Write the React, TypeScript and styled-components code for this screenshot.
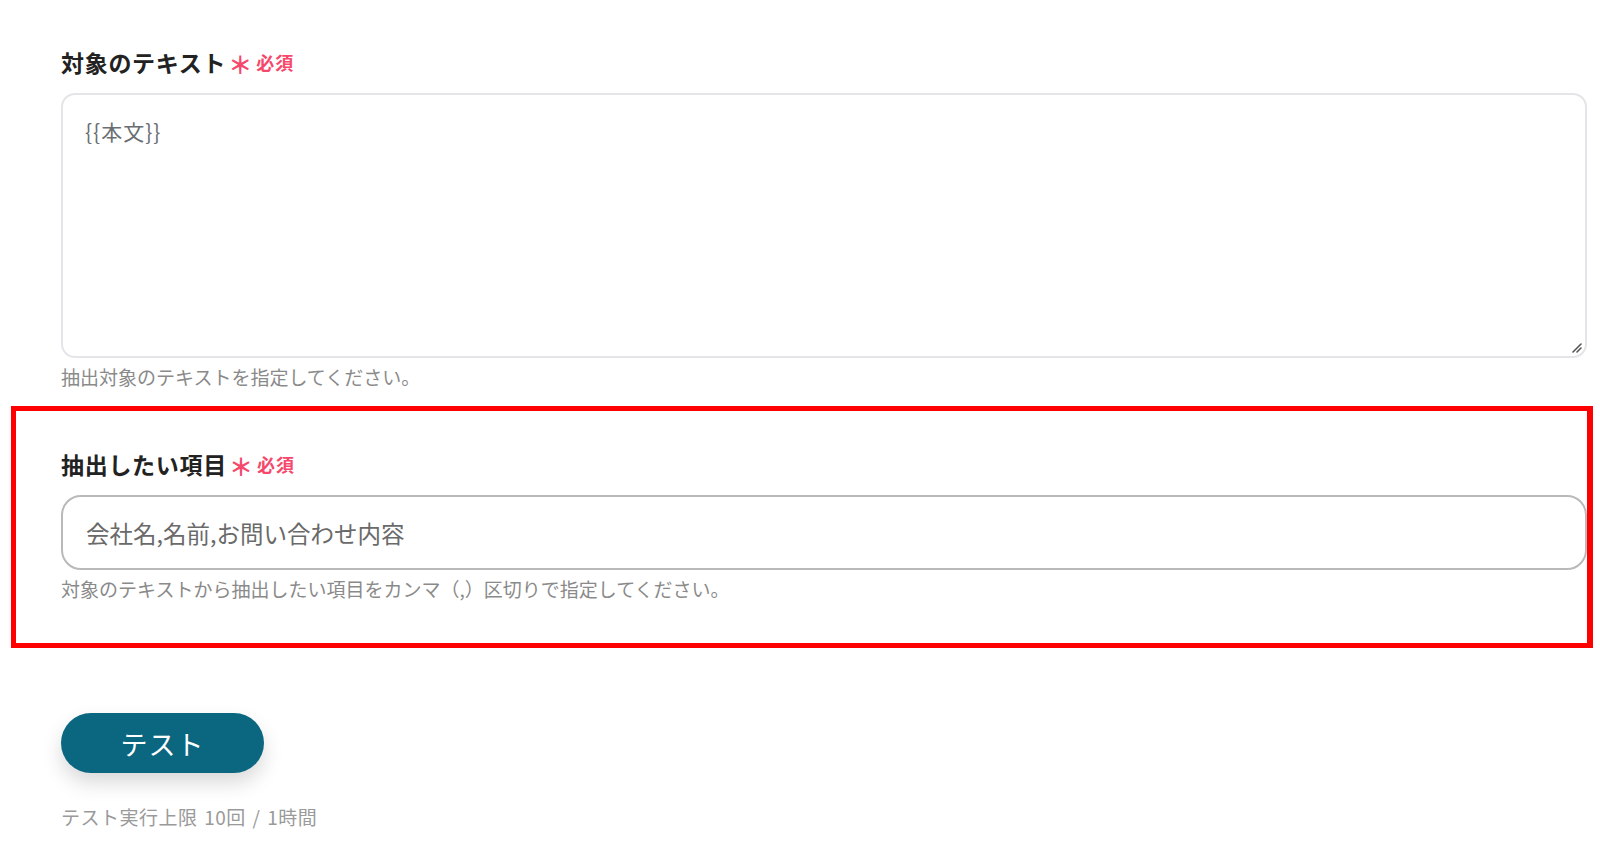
import React from "react";
import styled, { createGlobalStyle } from "styled-components";

const Global = createGlobalStyle`
  html, body { margin: 0; padding: 0; background: #ffffff; }
  body { font-family: "Noto Sans CJK JP", "Noto Sans", sans-serif; color: #222; }
  * { box-sizing: border-box; }
`;

const Page = styled.div`
  width: 1600px;
  padding: 47px 7px 0 11px;
  display: flex;
  flex-direction: column;
`;

const Field = styled.section<{ $highlight?: boolean }>`
  display: flex;
  flex-direction: column;
  ${({ $highlight }) =>
    $highlight
      ? `border: 5px solid #ff0000; border-right-width: 6px; padding: 38px 0 41px 45px; margin-top: 16px;`
      : `padding: 0 6px 0 50px;`}
`;

const Label = styled.div`
  display: flex;
  align-items: center;
  height: 30px;
  font-size: 23px;
  font-weight: 700;
  letter-spacing: 0.7px;
  color: #222;
  margin-bottom: 16px;
`;

const Required = styled.span`
  display: inline-flex;
  align-items: center;
  margin-left: 2px;
  color: #f5486c;
  font-size: 18px;
  font-weight: 700;
  letter-spacing: 1px;
`;

const Star = styled.span`
  font-size: 24px;
  margin-right: 3px;
  line-height: 1;
  position: relative;
  top: 2px;
`;

const TextArea = styled.div`
  position: relative;
  height: 265px;
  border: 2px solid #e3e5e8;
  border-radius: 14px;
  padding: 22px 22px;
  font-size: 21px;
  line-height: 28px;
  letter-spacing: 1px;
  color: #6a6e73;
`;

const Grip = styled.svg`
  position: absolute;
  right: 3px;
  bottom: 3px;
`;

const Input = styled.div`
  height: 75px;
  border: 2px solid #b9b9b9;
  border-radius: 20px;
  padding: 0 23px;
  display: flex;
  align-items: center;
  font-size: 23.5px;
  color: #6a6a6a;
`;

const Help = styled.div`
  margin-top: 6px;
  height: 26px;
  line-height: 26px;
  font-size: 19px;
  color: #8a8a8a;
`;

const Actions = styled.div`
  padding: 65px 0 0 50px;
  display: flex;
  flex-direction: column;
  align-items: flex-start;
`;

const Button = styled.button`
  width: 203px;
  height: 60px;
  border: none;
  border-radius: 30px;
  background: #0b6680;
  color: #ffffff;
  font-family: inherit;
  font-size: 27px;
  letter-spacing: 1px;
  box-shadow: 0 10px 20px rgba(0, 0, 0, 0.15);
  cursor: pointer;
`;

const Limit = styled.div`
  margin-top: 31px;
  font-size: 19px;
  line-height: 26px;
  letter-spacing: 0.5px;
  word-spacing: 2px;
  color: #9a9a9a;
`;

export default function App() {
  return (
    <>
      <Global />
      <Page>
        <Field>
          <Label>
            対象のテキスト
            <Required>
              <Star>＊</Star>必須
            </Required>
          </Label>
          <TextArea>
            {"{{本文}}"}
            <Grip width="12" height="12" viewBox="0 0 12 12">
              <path d="M11 3 L3 11 M11 7 L7 11" stroke="#555" strokeWidth="1.6" strokeLinecap="round" />
            </Grip>
          </TextArea>
          <Help>抽出対象のテキストを指定してください。</Help>
        </Field>
        <Field $highlight>
          <Label>
            抽出したい項目
            <Required>
              <Star>＊</Star>必須
            </Required>
          </Label>
          <Input>会社名,名前,お問い合わせ内容</Input>
          <Help>対象のテキストから抽出したい項目をカンマ（,）区切りで指定してください。</Help>
        </Field>
        <Actions>
          <Button>テスト</Button>
          <Limit>テスト実行上限 10回 / 1時間</Limit>
        </Actions>
      </Page>
    </>
  );
}
